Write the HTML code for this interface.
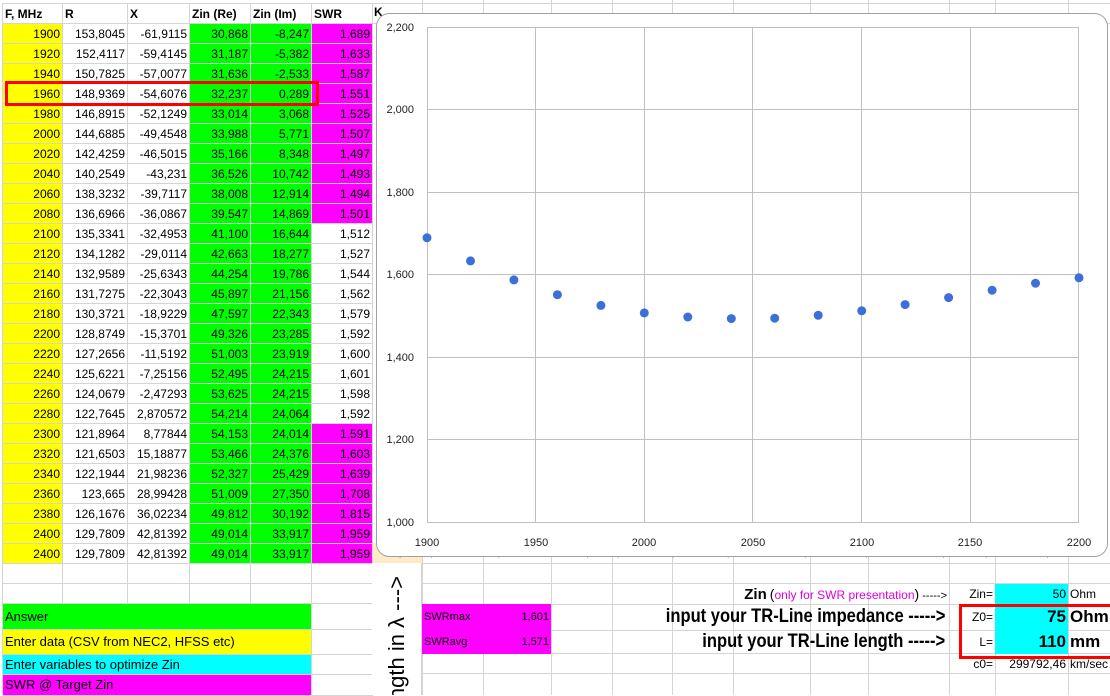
<!DOCTYPE html>
<html><head><meta charset="utf-8"><style>
*{margin:0;padding:0;box-sizing:border-box}
body{width:1110px;height:695px;overflow:hidden;background:#fff;position:relative;font-family:"Liberation Sans",sans-serif;font-size:12px;color:#000}
.vl{position:absolute;top:0;width:1px;height:695px;background:#d4d4d4}
.hl{position:absolute;left:372px;height:1px;width:738px;background:#d4d4d4}
table{position:absolute;left:2px;top:3px;border-collapse:collapse;table-layout:fixed}
td{border:1px solid #d4d4d4;height:20px;text-align:right;padding:0 2px;white-space:nowrap;overflow:hidden;line-height:18px}
tr.h td{font-weight:bold;text-align:left;font-size:12px}
.y{background:#ffff00}.g{background:#00ff00}.m{background:#ff00ff}.c{background:#00ffff}
.abs{position:absolute;white-space:nowrap}
</style></head><body>
<div class="vl" style="left:422px"></div><div class="vl" style="left:483px"></div><div class="vl" style="left:551px"></div><div class="vl" style="left:612px"></div><div class="vl" style="left:672px"></div><div class="vl" style="left:733px"></div><div class="vl" style="left:810px"></div><div class="vl" style="left:868px"></div><div class="vl" style="left:949px"></div><div class="vl" style="left:995px"></div><div class="vl" style="left:1068px"></div>
<div class="hl" style="top:3px"></div><div class="hl" style="top:23px"></div><div class="hl" style="top:563px"></div><div class="hl" style="top:583px"></div><div class="hl" style="top:604px"></div><div class="hl" style="top:630px"></div><div class="hl" style="top:653px"></div><div class="hl" style="top:673px"></div>
<div class="abs" style="left:374px;top:5px;font-weight:bold">K</div>
<table>
<colgroup><col style="width:60px"><col style="width:65px"><col style="width:62px"><col style="width:61px"><col style="width:61px"><col style="width:61px"></colgroup>
<tr class="h"><td>F, MHz</td><td>R</td><td>X</td><td>Zin (Re)</td><td>Zin (Im)</td><td>SWR</td></tr>
<tr><td class="y">1900</td><td>153,8045</td><td>-61,9115</td><td class="g">30,868</td><td class="g">-8,247</td><td class="m">1,689</td></tr>
<tr><td class="y">1920</td><td>152,4117</td><td>-59,4145</td><td class="g">31,187</td><td class="g">-5,382</td><td class="m">1,633</td></tr>
<tr><td class="y">1940</td><td>150,7825</td><td>-57,0077</td><td class="g">31,636</td><td class="g">-2,533</td><td class="m">1,587</td></tr>
<tr><td class="y">1960</td><td>148,9369</td><td>-54,6076</td><td class="g">32,237</td><td class="g">0,289</td><td class="m">1,551</td></tr>
<tr><td class="y">1980</td><td>146,8915</td><td>-52,1249</td><td class="g">33,014</td><td class="g">3,068</td><td class="m">1,525</td></tr>
<tr><td class="y">2000</td><td>144,6885</td><td>-49,4548</td><td class="g">33,988</td><td class="g">5,771</td><td class="m">1,507</td></tr>
<tr><td class="y">2020</td><td>142,4259</td><td>-46,5015</td><td class="g">35,166</td><td class="g">8,348</td><td class="m">1,497</td></tr>
<tr><td class="y">2040</td><td>140,2549</td><td>-43,231</td><td class="g">36,526</td><td class="g">10,742</td><td class="m">1,493</td></tr>
<tr><td class="y">2060</td><td>138,3232</td><td>-39,7117</td><td class="g">38,008</td><td class="g">12,914</td><td class="m">1,494</td></tr>
<tr><td class="y">2080</td><td>136,6966</td><td>-36,0867</td><td class="g">39,547</td><td class="g">14,869</td><td class="m">1,501</td></tr>
<tr><td class="y">2100</td><td>135,3341</td><td>-32,4953</td><td class="g">41,100</td><td class="g">16,644</td><td>1,512</td></tr>
<tr><td class="y">2120</td><td>134,1282</td><td>-29,0114</td><td class="g">42,663</td><td class="g">18,277</td><td>1,527</td></tr>
<tr><td class="y">2140</td><td>132,9589</td><td>-25,6343</td><td class="g">44,254</td><td class="g">19,786</td><td>1,544</td></tr>
<tr><td class="y">2160</td><td>131,7275</td><td>-22,3043</td><td class="g">45,897</td><td class="g">21,156</td><td>1,562</td></tr>
<tr><td class="y">2180</td><td>130,3721</td><td>-18,9229</td><td class="g">47,597</td><td class="g">22,343</td><td>1,579</td></tr>
<tr><td class="y">2200</td><td>128,8749</td><td>-15,3701</td><td class="g">49,326</td><td class="g">23,285</td><td>1,592</td></tr>
<tr><td class="y">2220</td><td>127,2656</td><td>-11,5192</td><td class="g">51,003</td><td class="g">23,919</td><td>1,600</td></tr>
<tr><td class="y">2240</td><td>125,6221</td><td>-7,25156</td><td class="g">52,495</td><td class="g">24,215</td><td>1,601</td></tr>
<tr><td class="y">2260</td><td>124,0679</td><td>-2,47293</td><td class="g">53,625</td><td class="g">24,215</td><td>1,598</td></tr>
<tr><td class="y">2280</td><td>122,7645</td><td>2,870572</td><td class="g">54,214</td><td class="g">24,064</td><td>1,592</td></tr>
<tr><td class="y">2300</td><td>121,8964</td><td>8,77844</td><td class="g">54,153</td><td class="g">24,014</td><td class="m">1,591</td></tr>
<tr><td class="y">2320</td><td>121,6503</td><td>15,18877</td><td class="g">53,466</td><td class="g">24,376</td><td class="m">1,603</td></tr>
<tr><td class="y">2340</td><td>122,1944</td><td>21,98236</td><td class="g">52,327</td><td class="g">25,429</td><td class="m">1,639</td></tr>
<tr><td class="y">2360</td><td>123,665</td><td>28,99428</td><td class="g">51,009</td><td class="g">27,350</td><td class="m">1,708</td></tr>
<tr><td class="y">2380</td><td>126,1676</td><td>36,02234</td><td class="g">49,812</td><td class="g">30,192</td><td class="m">1,815</td></tr>
<tr><td class="y">2400</td><td>129,7809</td><td>42,81392</td><td class="g">49,014</td><td class="g">33,917</td><td class="m">1,959</td></tr>
<tr><td class="y">2400</td><td>129,7809</td><td>42,81392</td><td class="g">49,014</td><td class="g">33,917</td><td class="m">1,959</td></tr>
<tr><td></td><td></td><td></td><td></td><td></td><td></td></tr>
<tr><td></td><td></td><td></td><td></td><td></td><td></td></tr>
<tr style="height:26px"><td colspan="5" class="g" style="text-align:left;font-size:13px">Answer</td><td></td></tr>
<tr style="height:25px"><td colspan="5" class="y" style="text-align:left;font-size:13px">Enter data (CSV from NEC2, HFSS etc)</td><td></td></tr>
<tr><td colspan="5" class="c" style="text-align:left;font-size:13px">Enter variables to optimize Zin</td><td></td></tr>
<tr style="height:21px"><td colspan="5" class="m" style="text-align:left;font-size:13px">SWR @ Target Zin</td><td></td></tr>
</table>
<div class="abs" style="left:5px;top:81px;width:314px;height:25px;border:3px solid #f00"></div>
<div class="abs" style="left:373px;top:543px;width:49px;height:20px;background:#fdebc8;text-align:right;padding-right:2px;line-height:20px;font-size:11px">0,001</div>
<div class="abs" style="left:424px;top:543px;line-height:20px;font-size:11px;color:#333">0,5241999 129,7809109. &nbsp; &nbsp; &nbsp; 124,914 0,0303002 0,3330300 0,7313033013 -0,0017317 94,943300047 -31,1313 34,0007000 29,1084</div>
<svg class="abs" style="left:0;top:0" width="1110" height="695" viewBox="0 0 1110 695">
<rect x="376.5" y="13.5" width="731" height="543" rx="13" fill="#fff" stroke="#a0a0a0"/>
<g stroke="#c0c0c0" stroke-width="1">
<line x1="427" y1="27.5" x2="1079" y2="27.5"/><line x1="427" y1="109.5" x2="1079" y2="109.5"/><line x1="427" y1="192.5" x2="1079" y2="192.5"/><line x1="427" y1="274.5" x2="1079" y2="274.5"/><line x1="427" y1="357.5" x2="1079" y2="357.5"/><line x1="427" y1="439.5" x2="1079" y2="439.5"/><line x1="427" y1="522.5" x2="1079" y2="522.5"/>
<line x1="427.5" y1="27" x2="427.5" y2="522"/><line x1="535.5" y1="27" x2="535.5" y2="522"/><line x1="644.5" y1="27" x2="644.5" y2="522"/><line x1="752.5" y1="27" x2="752.5" y2="522"/><line x1="861.5" y1="27" x2="861.5" y2="522"/><line x1="970.5" y1="27" x2="970.5" y2="522"/><line x1="1078.5" y1="27" x2="1078.5" y2="522"/>
</g>
<g font-family="Liberation Sans,sans-serif" font-size="11" fill="#222" text-anchor="end">
<text x="414" y="31">2,200</text><text x="414" y="113">2,000</text><text x="414" y="196">1,800</text><text x="414" y="278">1,600</text><text x="414" y="361">1,400</text><text x="414" y="443">1,200</text><text x="414" y="526">1,000</text>
</g>
<g font-family="Liberation Sans,sans-serif" font-size="11" fill="#222" text-anchor="middle">
<text x="427" y="546">1900</text><text x="536" y="546">1950</text><text x="644" y="546">2000</text><text x="753" y="546">2050</text><text x="862" y="546">2100</text><text x="970" y="546">2150</text><text x="1079" y="546">2200</text>
</g>
<g fill="#3d6fd8">
<circle cx="427" cy="237.8" r="4.5"/><circle cx="470.5" cy="260.9" r="4.5"/><circle cx="513.9" cy="279.9" r="4.5"/><circle cx="557.4" cy="294.7" r="4.5"/><circle cx="600.9" cy="305.4" r="4.5"/><circle cx="644.3" cy="312.9" r="4.5"/><circle cx="687.8" cy="317" r="4.5"/><circle cx="731.3" cy="318.6" r="4.5"/><circle cx="774.7" cy="318.2" r="4.5"/><circle cx="818.2" cy="315.3" r="4.5"/><circle cx="861.7" cy="310.8" r="4.5"/><circle cx="905.1" cy="304.6" r="4.5"/><circle cx="948.6" cy="297.6" r="4.5"/><circle cx="992.1" cy="290.2" r="4.5"/><circle cx="1035.5" cy="283.2" r="4.5"/><circle cx="1079" cy="277.8" r="4.5"/>
</g>
</svg>
<div class="abs" style="left:372px;top:563px;width:50px;height:132px;background:#fff;overflow:hidden;border-right:1px solid #d4d4d4">
<div class="abs" style="left:12px;top:13px;writing-mode:vertical-rl;transform:rotate(180deg);font-size:22px;line-height:26px">ngth in λ ---&gt;</div>
</div>
<div class="abs m" style="left:422px;top:604px;width:129px;height:26px;font-size:11px;line-height:26px;padding:0 2px"><span>SWRmax</span><span style="float:right">1,601</span></div>
<div class="abs m" style="left:422px;top:630px;width:129px;height:24px;font-size:11px;line-height:24px;padding:0 2px"><span>SWRavg</span><span style="float:right">1,571</span></div>
<div class="abs" style="right:163px;top:584px;line-height:20px;font-size:11px"><b style="font-size:15px">Zin</b> <span style="font-size:14px">(</span><span style="color:#e000e0;font-size:12px">only for SWR presentation</span><span style="font-size:14px">)</span> -----&gt;</div>
<div class="abs" style="right:165px;top:604px;line-height:26px;font-size:19px;font-weight:bold;transform:scaleX(0.87);transform-origin:right center">input your TR-Line impedance -----&gt;</div>
<div class="abs" style="right:165px;top:630px;line-height:24px;font-size:19px;font-weight:bold;transform:scaleX(0.87);transform-origin:right center">input your TR-Line length -----&gt;</div>
<div class="abs c" style="left:995px;top:584px;width:73px;height:20px;text-align:right;padding-right:2px;line-height:20px">50</div>
<div class="abs c" style="left:995px;top:604px;width:73px;height:26px;text-align:right;padding-right:2px;line-height:26px;font-size:17px;font-weight:bold">75</div>
<div class="abs c" style="left:995px;top:630px;width:73px;height:24px;text-align:right;padding-right:2px;line-height:24px;font-size:17px;font-weight:bold">110</div>
<div class="abs" style="left:950px;width:43px;top:584px;text-align:right;line-height:20px">Zin=</div>
<div class="abs" style="left:950px;width:43px;top:604px;text-align:right;line-height:26px">Z0=</div>
<div class="abs" style="left:950px;width:43px;top:630px;text-align:right;line-height:24px">L=</div>
<div class="abs" style="left:950px;width:43px;top:654px;text-align:right;line-height:20px">c0=</div>
<div class="abs" style="left:995px;width:73px;top:654px;text-align:right;line-height:20px;padding-right:2px">299792,46</div>
<div class="abs" style="left:1070px;top:584px;line-height:20px">Ohm</div>
<div class="abs" style="left:1070px;top:604px;line-height:26px;font-size:17px;font-weight:bold">Ohm</div>
<div class="abs" style="left:1070px;top:630px;line-height:24px;font-size:17px;font-weight:bold">mm</div>
<div class="abs" style="left:1070px;top:654px;line-height:20px">km/sec</div>
<div class="abs" style="left:959px;top:604px;width:155px;height:55px;border:3px solid #f00"></div>
</body></html>
